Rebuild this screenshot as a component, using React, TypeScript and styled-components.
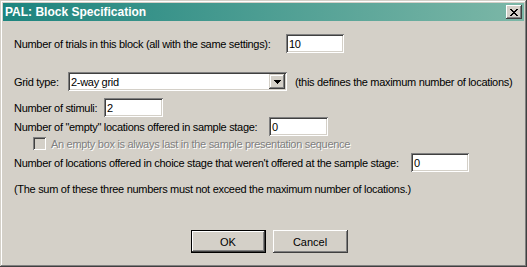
import styled, { createGlobalStyle } from "styled-components";

const Global = createGlobalStyle`
  html, body {
    margin: 0;
    padding: 0;
    background: #d4d0c8;
  }
  * {
    box-sizing: border-box;
  }
`;

const face = "#d4d0c8";

const Window = styled.div`
  width: 527px;
  height: 267px;
  padding: 3px;
  background: ${face};
  box-shadow: inset -1px -1px #404040, inset 1px 1px ${face},
    inset -2px -2px #808080, inset 2px 2px #ffffff;
  font-family: "Liberation Sans", Arial, sans-serif;
  font-size: 11px;
  letter-spacing: -0.3px;
  color: #000;
  display: flex;
  flex-direction: column;
`;

const TitleBar = styled.div`
  height: 18px;
  display: flex;
  align-items: center;
  justify-content: space-between;
  padding: 0 2px;
  background: linear-gradient(to right, #1d847e, #7cb7a7);
`;

const Title = styled.span`
  color: #fff;
  font-weight: bold;
  font-size: 12px;
  letter-spacing: 0;
`;

const CloseButton = styled.div`
  width: 16px;
  height: 14px;
  background: ${face};
  display: flex;
  align-items: center;
  justify-content: center;
  box-shadow: inset -1px -1px #404040, inset 1px 1px #ffffff,
    inset -2px -2px #808080, inset 2px 2px ${face};
`;

const Body = styled.div`
  display: flex;
  flex-direction: column;
  padding-left: 11px;
`;

const Row = styled.div<{ $top: number; $h?: number }>`
  display: flex;
  align-items: center;
  margin-top: ${(p) => p.$top}px;
  height: ${(p) => p.$h ?? 19}px;
  white-space: nowrap;
`;

const Label = styled.span<{ $w?: number }>`
  display: inline-block;
  width: ${(p) => (p.$w ? `${p.$w}px` : "auto")};
  flex-shrink: 0;
`;

const Sunken = `
  background: #fff;
  box-shadow: inset 1px 1px #808080, inset -1px -1px #ffffff,
    inset 2px 2px #404040, inset -2px -2px ${face};
`;

const Field = styled.div<{ $w: number }>`
  ${Sunken}
  width: ${(p) => p.$w}px;
  height: 19px;
  padding: 0 3px;
  display: flex;
  align-items: center;
`;

const Select = styled.div`
  ${Sunken}
  width: 219px;
  height: 19px;
  padding: 2px 2px 2px 3px;
  display: flex;
  align-items: center;
  justify-content: space-between;
`;

const ArrowButton = styled.div`
  width: 16px;
  height: 15px;
  background: ${face};
  display: flex;
  align-items: center;
  justify-content: center;
  box-shadow: inset -1px -1px #404040, inset 1px 1px ${face},
    inset -2px -2px #808080, inset 2px 2px #ffffff;
`;

const Note = styled.span`
  margin-left: 8px;
`;

const CheckRow = styled(Row)`
  padding-left: 19px;
`;

const CheckBox = styled.div`
  width: 13px;
  height: 13px;
  flex-shrink: 0;
  background: ${face};
  box-shadow: inset 1px 1px #808080, inset -1px -1px #ffffff,
    inset 2px 2px #404040, inset -2px -2px ${face};
`;

const Disabled = styled.span`
  margin-left: 5px;
  color: #808080;
  text-shadow: 1px 1px #ffffff;
`;

const Buttons = styled.div`
  display: flex;
  justify-content: center;
  gap: 7px;
  margin-top: 35px;
`;

const Button = styled.div<{ $default?: boolean }>`
  width: 75px;
  height: 23px;
  display: flex;
  align-items: center;
  justify-content: center;
  background: ${face};
  letter-spacing: 0;
  box-shadow: ${(p) =>
    p.$default
      ? `inset 0 0 0 1px #000, inset -2px -2px #404040, inset 2px 2px #ffffff, inset -3px -3px #808080`
      : `inset -1px -1px #404040, inset 1px 1px #ffffff, inset -2px -2px #808080`};
`;

function CloseIcon() {
  return (
    <svg width="8" height="7" viewBox="0 0 8 7" shapeRendering="crispEdges">
      <path
        d="M0 0h2v1H0zM6 0h2v1H6zM1 1h2v1H1zM5 1h2v1H5zM2 2h4v1H2zM3 3h2v1H3zM2 4h4v1H2zM1 5h2v1H1zM5 5h2v1H5zM0 6h2v1H0zM6 6h2v1H6z"
        fill="#000"
      />
    </svg>
  );
}

function DownArrow() {
  return (
    <svg width="7" height="4" viewBox="0 0 7 4" shapeRendering="crispEdges">
      <path d="M0 0h7v1H0zM1 1h5v1H1zM2 2h3v1H2zM3 3h1v1H3z" fill="#000" />
    </svg>
  );
}

export default function App() {
  return (
    <>
      <Global />
      <Window>
        <TitleBar>
          <Title>PAL: Block Specification</Title>
          <CloseButton>
            <CloseIcon />
          </CloseButton>
        </TitleBar>
        <Body>
          <Row $top={13}>
            <Label $w={272}>Number of trials in this block (all with the same settings):</Label>
            <Field $w={58}>10</Field>
          </Row>
          <Row $top={19}>
            <Label $w={54}>Grid type:</Label>
            <Select>
              <span>2-way grid</span>
              <ArrowButton>
                <DownArrow />
              </ArrowButton>
            </Select>
            <Note>(this defines the maximum number of locations)</Note>
          </Row>
          <Row $top={7}>
            <Label $w={90}>Number of stimuli:</Label>
            <Field $w={59}>2</Field>
          </Row>
          <Row $top={0}>
            <Label $w={255}>Number of "empty" locations offered in sample stage:</Label>
            <Field $w={59}>0</Field>
          </Row>
          <CheckRow $top={1} $h={13}>
            <CheckBox />
            <Disabled>An empty box is always last in the sample presentation sequence</Disabled>
          </CheckRow>
          <Row $top={3}>
            <Label $w={397}>
              Number of locations offered in choice stage that weren't offered at the sample stage:
            </Label>
            <Field $w={58}>0</Field>
          </Row>
          <Row $top={10} $h={13}>
            <Label>(The sum of these three numbers must not exceed the maximum number of locations.)</Label>
          </Row>
          <Buttons>
            <Button $default>OK</Button>
            <Button>Cancel</Button>
          </Buttons>
        </Body>
      </Window>
    </>
  );
}
